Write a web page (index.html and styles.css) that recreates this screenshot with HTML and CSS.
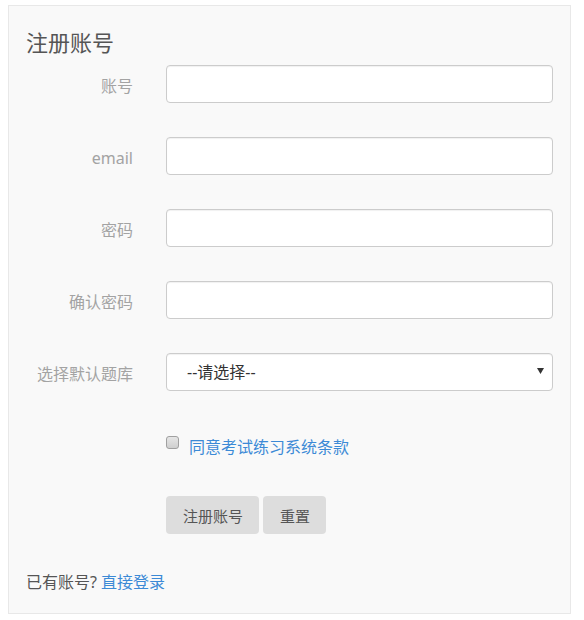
FILE: index.html
```html
<!DOCTYPE html>
<html lang="zh-CN">
<head>
<meta charset="utf-8">
<title>注册账号</title>
<link rel="stylesheet" href="styles.css">
</head>
<body>
<div class="panel">
  <h2 class="title">注册账号</h2>
  <form class="form">
    <div class="row">
      <label class="label">账号</label>
      <input class="control" type="text">
    </div>
    <div class="row">
      <label class="label">email</label>
      <input class="control" type="text">
    </div>
    <div class="row">
      <label class="label">密码</label>
      <input class="control" type="password">
    </div>
    <div class="row">
      <label class="label">确认密码</label>
      <input class="control" type="password">
    </div>
    <div class="row">
      <label class="label">选择默认题库</label>
      <div class="select-wrap">
        <select class="control select">
          <option>--请选择--</option>
        </select>
        <svg class="caret" width="7" height="6" viewBox="0 0 7 6"><path d="M0 0H7L3.5 6Z" fill="#333"/></svg>
      </div>
    </div>
    <div class="check-row">
      <input class="check" type="checkbox">
      <a class="link" href="#">同意考试练习系统条款</a>
    </div>
    <div class="btn-row">
      <button class="btn" type="button">注册账号</button>
      <button class="btn" type="button">重置</button>
    </div>
  </form>
  <p class="footer">已有账号? <a class="link" href="#">直接登录</a></p>
</div>
</body>
</html>
```
FILE: styles.css
```css
* { box-sizing: border-box; }
html, body { margin: 0; padding: 0; background: #fff; }
body {
  font-family: "Noto Sans", "Noto Sans CJK SC", sans-serif;
  font-size: 16px;
  color: #555;
}
.panel {
  margin: 5px 0 0 8px;
  width: 563px;
  height: 609px;
  border: 1px solid #e8e8e8;
  background: #f9f9f9;
  padding: 21px 17px 20px 17px;
}
.title {
  margin: 0;
  font-size: 22px;
  font-weight: normal;
  line-height: 30px;
  color: #555;
}
.form {
  margin-top: 8px;
  display: flex;
  flex-direction: column;
}
.row {
  display: grid;
  grid-template-columns: 107px 387px;
  column-gap: 33px;
  align-items: center;
  margin-bottom: 34px;
}
.row:nth-child(5) { margin-bottom: 0; }
.label {
  text-align: right;
  color: #a3a3a3;
  font-size: 16px;
  line-height: 22px;
  padding-top: 4px;
  white-space: nowrap;
}
.control {
  width: 387px;
  height: 38px;
  border: 1px solid #ccc;
  border-radius: 4px;
  background: #fff;
  box-shadow: inset 0 1px 1px rgba(0,0,0,0.06);
  font: inherit;
  outline: none;
}
.select-wrap { position: relative; }
.select {
  appearance: none;
  -webkit-appearance: none;
  padding: 0 0 0 20px;
  color: #333;
  font-size: 16px;
  display: block;
}
.caret {
  position: absolute;
  left: 371px;
  top: 15px;
}
.check-row {
  margin-top: 45px;
  margin-left: 140px;
  display: flex;
  align-items: flex-start;
}
.check {
  appearance: none;
  -webkit-appearance: none;
  margin: 0 10px 0 0;
  width: 13px;
  height: 13px;
  border: 1px solid #a0a0a0;
  border-radius: 3px;
  background: linear-gradient(#e6e6e6, #cfcfcf);
}
.link {
  color: #3c8ad6;
  text-decoration: none;
  font-size: 16px;
  line-height: 22px;
}
.btn-row {
  margin-top: 38px;
  margin-left: 140px;
  display: flex;
  gap: 4px;
}
.btn {
  height: 38px;
  padding: 0 16px 0 17px;
  border: none;
  border-radius: 4px;
  background: #ddd;
  color: #555;
  font: inherit;
  font-size: 15px;
}
.footer {
  margin: 37px 0 0 0;
  line-height: 22px;
  font-size: 16px;
  color: #555;
}
```
